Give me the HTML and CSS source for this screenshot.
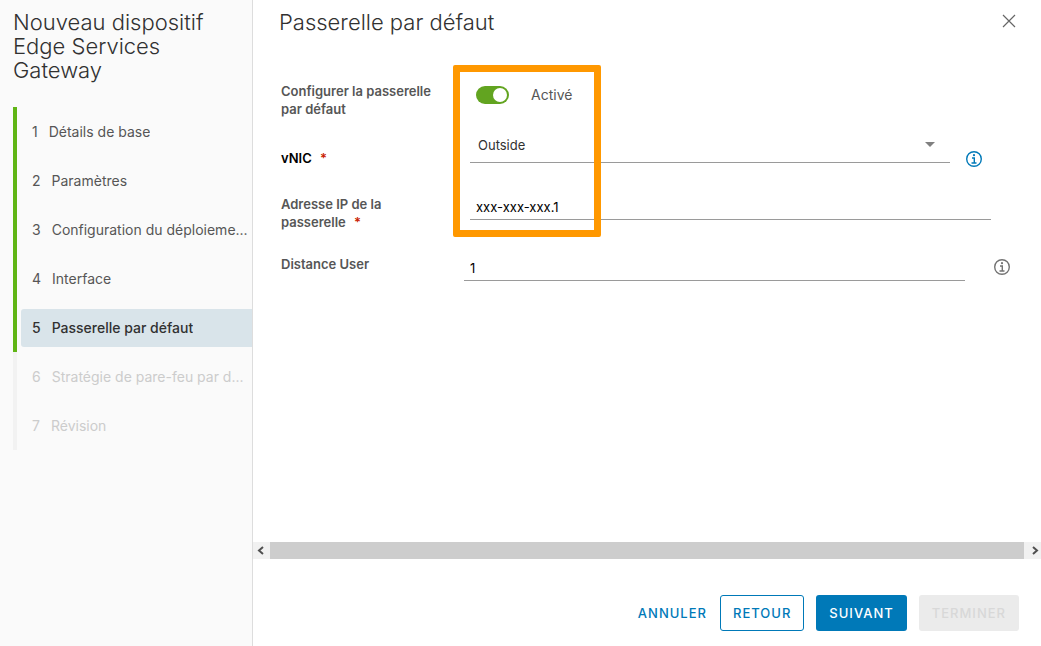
FILE: index.html
```html
<!DOCTYPE html>
<html lang="fr">
<head>
<meta charset="utf-8">
<meta name="viewport" content="width=device-width, initial-scale=1">
<title>Nouveau dispositif Edge Services Gateway</title>
<link rel="stylesheet" href="styles.css">
</head>
<body>
<div class="wizard">
  <aside class="sidebar">
    <h1 class="title">Nouveau dispositif Edge Services Gateway</h1>
    <nav aria-label="Étapes">
      <ol class="steps">
        <li class="step done"><button class="step-link" type="button"><span>1</span><span class="step-name">Détails de base</span></button></li>
        <li class="step done"><button class="step-link" type="button"><span>2</span><span class="step-name">Paramètres</span></button></li>
        <li class="step done"><button class="step-link" type="button"><span>3</span><span class="step-name">Configuration du déploieme...</span></button></li>
        <li class="step done"><button class="step-link" type="button"><span>4</span><span class="step-name">Interface</span></button></li>
        <li class="step done current"><button class="step-link" type="button" aria-current="step"><span>5</span><span class="step-name">Passerelle par défaut</span></button></li>
        <li class="step"><button class="step-link" type="button" disabled><span>6</span><span class="step-name">Stratégie de pare-feu par d...</span></button></li>
        <li class="step"><button class="step-link" type="button" disabled><span>7</span><span class="step-name">Révision</span></button></li>
      </ol>
    </nav>
  </aside>
  <main class="content">
    <header class="header">
      <h2 class="title">Passerelle par défaut</h2>
      <button class="icon-button close" type="button" aria-label="Fermer">
        <svg width="14" height="14" viewBox="0 0 14 14" fill="none" stroke="#666" stroke-width="1.2"><path d="M1 1l12 12M13 1L1 13"/></svg>
      </button>
    </header>
    <form class="form" id="gateway">
      <div class="row row-toggle">
        <label class="label" for="enabled">Configurer la passerelle par défaut</label>
        <input class="toggle" type="checkbox" role="switch" id="enabled" checked>
        <span class="toggle-state">Activé</span>
      </div>
      <div class="row row-vnic">
        <label class="label strong" for="vnic">vNIC <span class="required">*</span></label>
        <div class="select-wrap">
          <select class="field select" id="vnic"><option>Outside</option></select>
          <svg class="caret" width="10" height="5" viewBox="0 0 10 5"><path d="M0 0h10L5 5z" fill="#808080"/></svg>
        </div>
        <button class="icon-button info info-blue" type="button" aria-label="Informations vNIC">
          <svg width="16" height="16" viewBox="0 0 16 16" fill="none" stroke="currentColor"><circle cx="8" cy="8" r="7.3" stroke-width="1.4"/><path d="M6 7h2.300v5M5.500 12h5" stroke-width="1.4"/><circle cx="8" cy="4.200" r="1.100" fill="currentColor" stroke="none"/></svg>
        </button>
      </div>
      <div class="row row-ip">
        <label class="label" for="ip"><span>Adresse IP de la</span> <span class="last-word"><span>passerelle</span> <span class="required">*</span></span></label>
        <input class="field" type="text" id="ip" value="xxx-xxx-xxx.1">
      </div>
      <div class="row row-distance">
        <label class="label" for="distance">Distance User</label>
        <input class="field" type="text" id="distance" value="1">
        <button class="icon-button info" type="button" aria-label="Informations distance">
          <svg width="16" height="16" viewBox="0 0 16 16" fill="none" stroke="currentColor"><circle cx="8" cy="8" r="7.3" stroke-width="1.4"/><path d="M6 7h2.300v5M5.500 12h5" stroke-width="1.4"/><circle cx="8" cy="4.200" r="1.100" fill="currentColor" stroke="none"/></svg>
        </button>
      </div>
      <div class="highlight"></div>
    </form>
    <div class="scrollbar" aria-hidden="true">
      <span class="arrow"><svg width="17" height="17" viewBox="0 0 17 17" fill="none" stroke="#505050" stroke-width="2"><path d="M10 5L6 8.500l4 3.500"/></svg></span>
      <span class="thumb"></span>
      <span class="arrow"><svg width="17" height="17" viewBox="0 0 17 17" fill="none" stroke="#505050" stroke-width="2"><path d="M9 5l4 3.500L9 12"/></svg></span>
    </div>
    <footer class="footer">
      <button class="button link" type="button">ANNULER</button>
      <button class="button outline" type="button">RETOUR</button>
      <button class="button primary" type="submit" form="gateway">SUIVANT</button>
      <button class="button" type="button" disabled>TERMINER</button>
    </footer>
  </main>
</div>
</body>
</html>
```
FILE: styles.css
```css
* { box-sizing: border-box; }
body {
  margin: 0;
  background: #fff;
  color: #565656;
  font-family: Inter, "Open Sans", sans-serif;
  font-size: 14px;
}
button, input, select { font: inherit; color: inherit; margin: 0; }
button { border: 0; background: none; cursor: pointer; }
.wizard { display: flex; min-height: 100vh; }

.title {
  margin: 0;
  color: #313131;
  font-size: 22px;
  font-weight: 300;
  line-height: 24px;
}

.sidebar {
  flex: 0 0 253px;
  padding: 10px 0 0 13px;
  background: #fafafa;
  border-right: 1px solid #ddd;
}
.steps { list-style: none; margin: 25px 0 0; padding: 0; }
.step {
  padding: 6px 0 5px 4px;
  border-left: 4px solid #f2f2f2;
}
.step.done { border-left-color: #60b515; }
.step-link {
  display: flex;
  gap: 11px;
  width: 100%;
  padding: 0 0 0 11px;
  border-radius: 3px 0 0 3px;
  line-height: 38px;
  white-space: nowrap;
  text-align: left;
}
.step-name { overflow: hidden; text-overflow: ellipsis; }
.step-link:disabled { color: #ccc; cursor: default; }
.current .step-link { background: #d9e4ea; color: #313131; font-weight: 500; }

.content { flex: 1; min-width: 0; display: flex; flex-direction: column; }
.header {
  display: flex;
  justify-content: space-between;
  align-items: flex-start;
  padding: 10px 25px 10px 26px;
}
.icon-button { display: block; padding: 0; line-height: 0; }
.close { padding-top: 4px; }

.form { position: relative; flex: 1; padding: 38px 0 0 28px; }
.row { display: flex; align-items: flex-start; }
.label {
  flex: 0 0 189px;
  padding-right: 32px;
  font-size: 13px;
  font-weight: 600;
  line-height: 18px;
}
.last-word { display: block; }
.strong { color: #000; }
.required { margin-left: 5px; color: #c92100; }
.field {
  flex: 1;
  min-width: 0;
  height: 25px;
  padding: 0 6px;
  border: 0;
  border-bottom: 1px solid #9a9a9a;
  border-radius: 0;
  background: transparent;
  color: #000;
  font-size: 13px;
}

.toggle {
  appearance: none;
  width: 33px;
  height: 18px;
  margin: 4px 22px 0 6px;
  padding: 2px;
  border-radius: 9px;
  background: #999;
}
.toggle::before {
  content: "";
  display: block;
  width: 14px;
  height: 14px;
  border-radius: 50%;
  background: #fff;
}
.toggle:checked { background: #62a420; }
.toggle:checked::before { margin-left: auto; }
.toggle-state { padding-top: 3px; line-height: 20px; }

.row-vnic { padding: 15px 59px 0 0; }
.row-vnic .label { padding-top: 16px; }
.select-wrap { position: relative; flex: 1; min-width: 0; }
.select {
  appearance: none;
  display: block;
  width: 100%;
  height: 30px;
  padding: 0 24px 6px 8px;
  color: #313131;
}
.caret { position: absolute; right: 15px; top: 9px; pointer-events: none; }
.info { margin: 18px 0 0 16px; color: #737373; }
.info-blue { color: #0079b8; }

.row-ip { padding: 28px 50px 0 0; }
.row-distance { padding: 24px 31px 0 0; }
.row-distance .label { flex-basis: 183px; }
.row-distance .field { height: 26px; }
.row-distance .info { margin: 4px 0 0 29px; }

.highlight {
  position: absolute;
  left: 200px;
  top: 21px;
  width: 148px;
  height: 172px;
  border: 7px solid #ff9800;
  border-radius: 2px;
  pointer-events: none;
}

.scrollbar { display: flex; height: 17px; background: #f1f1f1; }
.arrow { flex: 0 0 17px; line-height: 0; }
.thumb { flex: 1; background: #cdcdcd; }

.footer {
  display: flex;
  justify-content: flex-end;
  gap: 12px;
  padding: 36px 22px 15px;
}
.button {
  height: 36px;
  padding: 0 12px;
  border: 1px solid transparent;
  border-radius: 3px;
  font-size: 13px;
  font-weight: 500;
  letter-spacing: 1px;
}
.button:disabled { background: #ebebeb; color: #d8d8d8; cursor: default; }
.link { padding: 0; color: #0079b8; }
.outline { border-color: #0079b8; color: #0079b8; }
.primary { background: #0079b8; color: #fff; }
```
